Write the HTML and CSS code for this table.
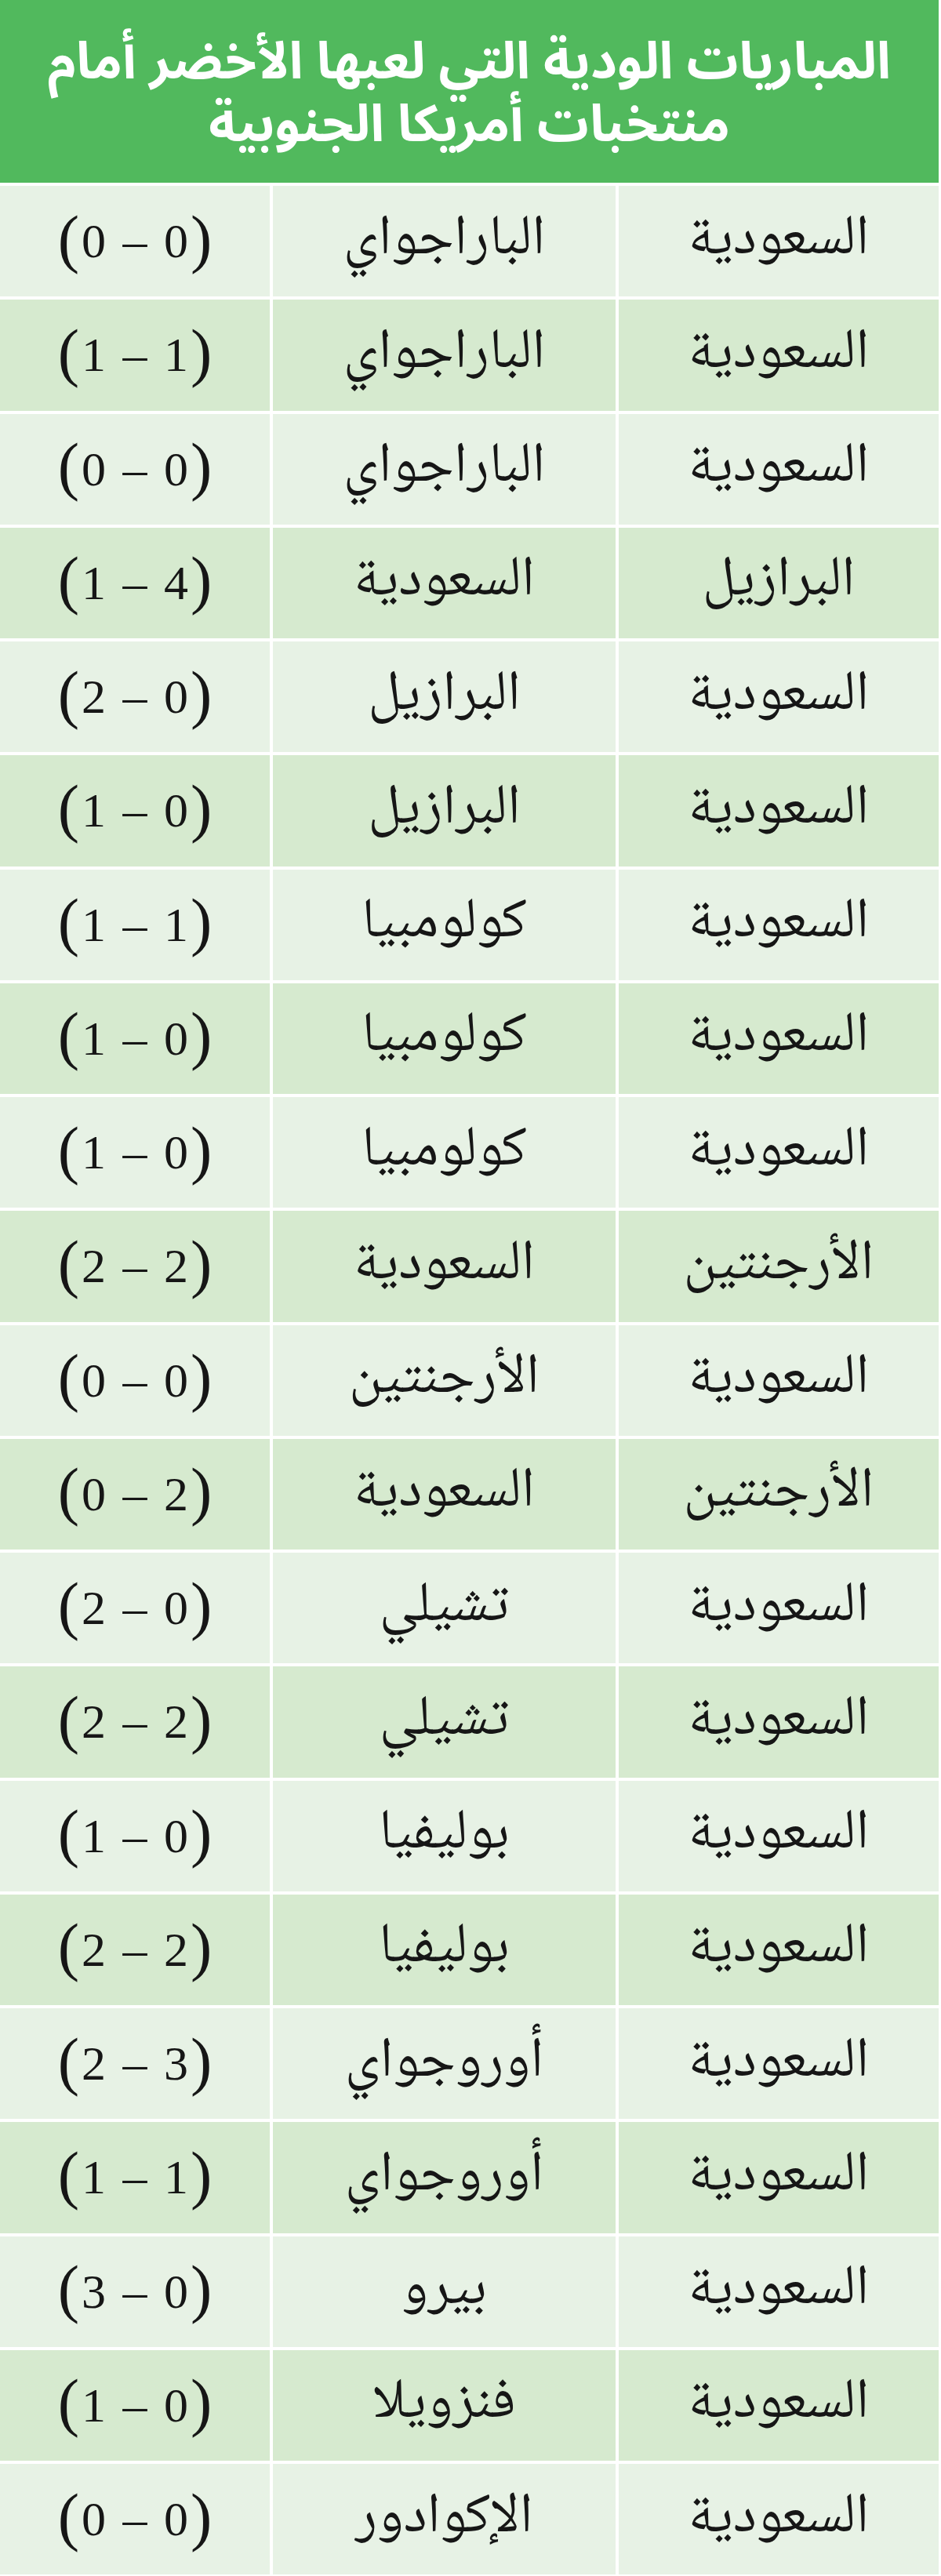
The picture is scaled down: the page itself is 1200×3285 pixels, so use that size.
FILE: index.html
```html
<!DOCTYPE html>
<html lang="ar" dir="rtl">
<head>
<meta charset="utf-8">
<title>المباريات الودية</title>
<link rel="stylesheet" href="styles.css">
</head>
<body>
<div class="board">
  <header class="title">
    <h1><span class="line">المباريات الودية التي لعبها الأخضر أمام</span><span class="line">منتخبات أمريكا الجنوبية</span></h1>
  </header>
  <div class="grid">
    <div class="cell team">السعودية</div><div class="cell team">الباراجواي</div><div class="cell score"><span class="p">(</span><span class="n">0 – 0</span><span class="p">)</span></div>
    <div class="cell team alt">السعودية</div><div class="cell team alt">الباراجواي</div><div class="cell score alt"><span class="p">(</span><span class="n">1 – 1</span><span class="p">)</span></div>
    <div class="cell team">السعودية</div><div class="cell team">الباراجواي</div><div class="cell score"><span class="p">(</span><span class="n">0 – 0</span><span class="p">)</span></div>
    <div class="cell team alt">البرازيل</div><div class="cell team alt">السعودية</div><div class="cell score alt"><span class="p">(</span><span class="n">1 – 4</span><span class="p">)</span></div>
    <div class="cell team">السعودية</div><div class="cell team">البرازيل</div><div class="cell score"><span class="p">(</span><span class="n">2 – 0</span><span class="p">)</span></div>
    <div class="cell team alt">السعودية</div><div class="cell team alt">البرازيل</div><div class="cell score alt"><span class="p">(</span><span class="n">1 – 0</span><span class="p">)</span></div>
    <div class="cell team">السعودية</div><div class="cell team">كولومبيا</div><div class="cell score"><span class="p">(</span><span class="n">1 – 1</span><span class="p">)</span></div>
    <div class="cell team alt">السعودية</div><div class="cell team alt">كولومبيا</div><div class="cell score alt"><span class="p">(</span><span class="n">1 – 0</span><span class="p">)</span></div>
    <div class="cell team">السعودية</div><div class="cell team">كولومبيا</div><div class="cell score"><span class="p">(</span><span class="n">1 – 0</span><span class="p">)</span></div>
    <div class="cell team alt">الأرجنتين</div><div class="cell team alt">السعودية</div><div class="cell score alt"><span class="p">(</span><span class="n">2 – 2</span><span class="p">)</span></div>
    <div class="cell team">السعودية</div><div class="cell team">الأرجنتين</div><div class="cell score"><span class="p">(</span><span class="n">0 – 0</span><span class="p">)</span></div>
    <div class="cell team alt">الأرجنتين</div><div class="cell team alt">السعودية</div><div class="cell score alt"><span class="p">(</span><span class="n">0 – 2</span><span class="p">)</span></div>
    <div class="cell team">السعودية</div><div class="cell team">تشيلي</div><div class="cell score"><span class="p">(</span><span class="n">2 – 0</span><span class="p">)</span></div>
    <div class="cell team alt">السعودية</div><div class="cell team alt">تشيلي</div><div class="cell score alt"><span class="p">(</span><span class="n">2 – 2</span><span class="p">)</span></div>
    <div class="cell team">السعودية</div><div class="cell team">بوليفيا</div><div class="cell score"><span class="p">(</span><span class="n">1 – 0</span><span class="p">)</span></div>
    <div class="cell team alt">السعودية</div><div class="cell team alt">بوليفيا</div><div class="cell score alt"><span class="p">(</span><span class="n">2 – 2</span><span class="p">)</span></div>
    <div class="cell team">السعودية</div><div class="cell team">أوروجواي</div><div class="cell score"><span class="p">(</span><span class="n">2 – 3</span><span class="p">)</span></div>
    <div class="cell team alt">السعودية</div><div class="cell team alt">أوروجواي</div><div class="cell score alt"><span class="p">(</span><span class="n">1 – 1</span><span class="p">)</span></div>
    <div class="cell team">السعودية</div><div class="cell team">بيرو</div><div class="cell score"><span class="p">(</span><span class="n">3 – 0</span><span class="p">)</span></div>
    <div class="cell team alt">السعودية</div><div class="cell team alt">فنزويلا</div><div class="cell score alt"><span class="p">(</span><span class="n">1 – 0</span><span class="p">)</span></div>
    <div class="cell team">السعودية</div><div class="cell team">الإكوادور</div><div class="cell score"><span class="p">(</span><span class="n">0 – 0</span><span class="p">)</span></div>
  </div>
</div>
</body>
</html>
```
FILE: styles.css
```css
html, body {
  margin: 0;
  padding: 0;
  background: #ffffff;
}

.board {
  width: 1197px;
  margin-left: auto;
  margin-right: 3px;
}

.title {
  height: 233px;
  background: #51b95d;
  display: flex;
  align-items: center;
  justify-content: center;
  margin-bottom: 4px;
}

.title h1 {
  margin: 0;
  color: #ffffff;
  font-family: "Noto Sans Arabic", "DejaVu Sans", sans-serif;
  font-weight: 700;
  font-size: 65.5px;
  text-align: center;
  padding-top: 4px;
}

.title .line {
  display: block;
  line-height: 80px;
}

.grid {
  display: grid;
  grid-template-columns: 408px 437px 344px;
  grid-auto-rows: 141.25px;
  gap: 4px;
}

.cell {
  background: #e7f2e5;
  display: flex;
  align-items: center;
  justify-content: center;
  color: #161616;
}

.cell.alt {
  background: #d6eacf;
}

.team {
  font-family: "Noto Naskh Arabic", "DejaVu Sans", serif;
  font-size: 72px;
  line-height: 1;
}

.score {
  direction: ltr;
  unicode-bidi: isolate;
  font-family: "Liberation Serif", "Times New Roman", serif;
  font-size: 62px;
}

.score .n {
  direction: ltr;
  unicode-bidi: isolate;
  word-spacing: 6px;
}

.score .p {
  font-size: 82px;
  font-weight: 400;
  margin: 0 3px;
  position: relative;
  top: -3px;
}
```
